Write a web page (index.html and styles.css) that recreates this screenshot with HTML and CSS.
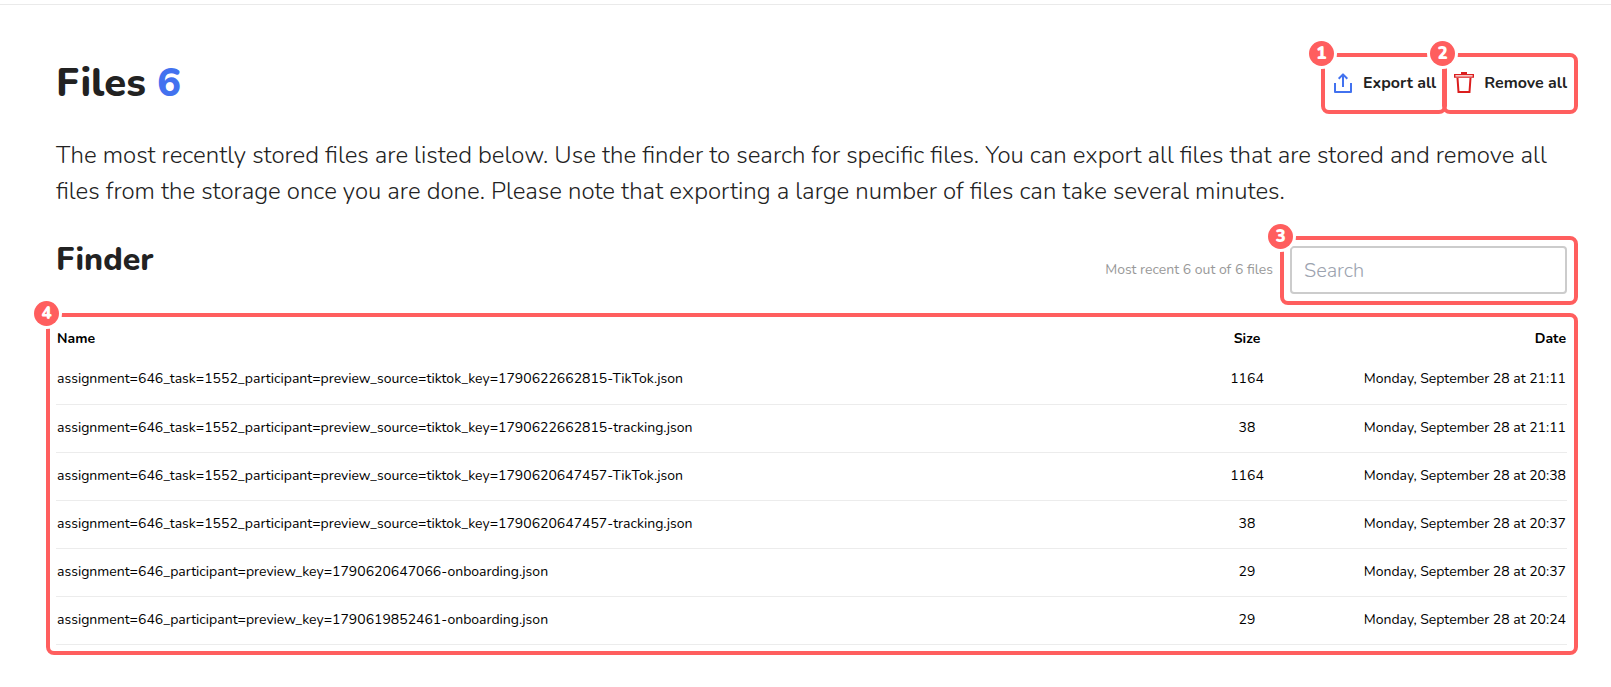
FILE: index.html
```html
<!DOCTYPE html>
<html lang="en">
<head>
    <meta charset="UTF-8">
    <meta name="viewport" content="width=device-width, initial-scale=1.0">
    <title>Files</title>

    <link rel="stylesheet" href="styles.css">

</head>
<body>

    <main class="page">
        <header class="page-header">
            <h1>Files <span class="count">6</span></h1>

            <div class="actions">
                <div class="callout callout-action">
                    <span class="badge">1</span>
                    <button type="button" class="action">
                        <svg class="icon" width="20" height="22" viewBox="0 0 20 22" fill="none" stroke="#4272ef" stroke-width="2" stroke-linejoin="round" aria-hidden="true">
                            <path d="M2 11v9h16v-9"/>
                            <path d="M10 15V3M5.700 6.700L10 2.400l4.300 4.300"/>
                        </svg>
                        Export all
                    </button>
                </div>
                <div class="callout callout-action">
                    <span class="badge">2</span>
                    <button type="button" class="action">
                        <svg class="icon" width="20" height="22" viewBox="0 0 20 22" fill="none" stroke="#db1e1e" stroke-width="2" aria-hidden="true">
                            <path d="M7 1h6"/>
                            <path d="M.700 2.600h18.600v2.500H.700z" stroke-width="1.400"/>
                            <path d="M3.500 6l1 14h11l1-14"/>
                        </svg>
                        Remove all
                    </button>
                </div>
            </div>
        </header>

        <p class="intro">The most recently stored files are listed below. Use the finder to search for specific files. You can export all files that are stored and remove all files from the storage once you are done. Please note that exporting a large number of files can take several minutes.</p>

        <section class="finder">
            <h2>Finder</h2>
            <label class="summary" for="search">Most recent 6 out of 6 files</label>
            <div class="callout callout-search">
                <span class="badge">3</span>
                <input type="search" id="search" name="search" placeholder="Search">
            </div>
        </section>

        <div class="callout callout-table">
            <span class="badge">4</span>
            <table>
                <thead>
                    <tr>
                        <th class="name">Name</th>
                        <th class="size">Size</th>
                        <th class="date">Date</th>
                    </tr>
                </thead>
                <tbody>
                    <tr>
                        <td class="name">assignment=646_task=1552_participant=preview_source=tiktok_key=1790622662815-TikTok.json</td>
                        <td class="size">1164</td>
                        <td class="date">Monday, September 28 at 21:11</td>
                    </tr>
                    <tr>
                        <td class="name">assignment=646_task=1552_participant=preview_source=tiktok_key=1790622662815-tracking.json</td>
                        <td class="size">38</td>
                        <td class="date">Monday, September 28 at 21:11</td>
                    </tr>
                    <tr>
                        <td class="name">assignment=646_task=1552_participant=preview_source=tiktok_key=1790620647457-TikTok.json</td>
                        <td class="size">1164</td>
                        <td class="date">Monday, September 28 at 20:38</td>
                    </tr>
                    <tr>
                        <td class="name">assignment=646_task=1552_participant=preview_source=tiktok_key=1790620647457-tracking.json</td>
                        <td class="size">38</td>
                        <td class="date">Monday, September 28 at 20:37</td>
                    </tr>
                    <tr>
                        <td class="name">assignment=646_participant=preview_key=1790620647066-onboarding.json</td>
                        <td class="size">29</td>
                        <td class="date">Monday, September 28 at 20:37</td>
                    </tr>
                    <tr>
                        <td class="name">assignment=646_participant=preview_key=1790619852461-onboarding.json</td>
                        <td class="size">29</td>
                        <td class="date">Monday, September 28 at 20:24</td>
                    </tr>
                </tbody>
            </table>
        </div>
    </main>

</body>
</html>
```
FILE: styles.css
```css
*{
    box-sizing: border-box;
}

body{
    font-family: Nunito, Lato, sans-serif;
    background-color: #fff;
    color: #222;
    margin: 0;
    padding-top: 4px;
}

.page{
    border-top: 1px solid #eaeaea;
    padding: 48px 33px 32px 46px;
}

h1, h2{
    margin: 0;
    font-weight: 800;
}

h1{
    font-size: 40px;
    line-height: 60px;
}

h2{
    font-size: 32px;
    line-height: 48px;
    margin-right: auto;
}

.count{
    color: #4272ef;
}

.page-header{
    display: flex;
    justify-content: space-between;
    padding-left: 10px;
}

.actions{
    display: flex;
}

/* red numbered frames */
.callout{
    position: relative;
    border: 4px solid #ff5e5e;
    border-radius: 8px;
}

.badge{
    position: absolute;
    top: -16px;
    left: -16px;
    z-index: 1;
    width: 25px;
    height: 25px;
    border-radius: 50%;
    box-shadow: 0 0 0 3px #fff;
    background-color: #ff5e5e;
    color: #fff;
    font-size: 17px;
    font-weight: 900;
    line-height: 26px;
    text-align: center;
}

.callout-action{
    height: 61px;
    padding: 0 7px 0 8px;
}

.callout-action + .callout-action{
    margin-left: -5px;
}

.action{
    display: flex;
    align-items: center;
    gap: 10px;
    height: 51px;
    padding: 0;
    border: none;
    background: none;
    color: #222;
    font-family: inherit;
    font-size: 16px;
    font-weight: 700;
    white-space: nowrap;
    cursor: pointer;
}

.intro{
    margin: 23px 0 27px;
    padding: 0 11px 0 10px;
    font-size: 24px;
    font-weight: 300;
    line-height: 36px;
}

.finder{
    display: flex;
    padding-left: 10px;
    margin-bottom: 8px;
}

.summary{
    margin-right: 7px;
    color: #999;
    font-size: 14px;
    line-height: 68px;
}

.callout-search{
    padding: 6px 7px 7px 6px;
}

.callout-search input{
    display: block;
    width: 277px;
    height: 48px;
    padding: 0 12px;
    border: 2px solid #ccc;
    border-radius: 4px;
    color: #222;
    font-family: inherit;
    font-size: 20px;
    font-weight: 300;
    appearance: none;
}

.callout-search input::placeholder{
    color: #9ca3af;
}

.callout-search input:focus{
    border-color: #4272ef;
    outline: none;
}

.callout-table{
    padding: 4px 7px 6px 6px;
}

table{
    width: 100%;
    border-collapse: collapse;
    color: #000;
    font-size: 14px;
}

th, td{
    height: 48px;
    padding: 0 1px;
    text-align: left;
}

td{
    padding-bottom: 2px;
}

th{
    height: 35px;
    font-weight: 700;
}

tbody tr{
    border-bottom: 1px solid #ececec;
}

.size{
    width: 80px;
    text-align: center;
}

.date{
    width: 280px;
    text-align: right;
}
```
